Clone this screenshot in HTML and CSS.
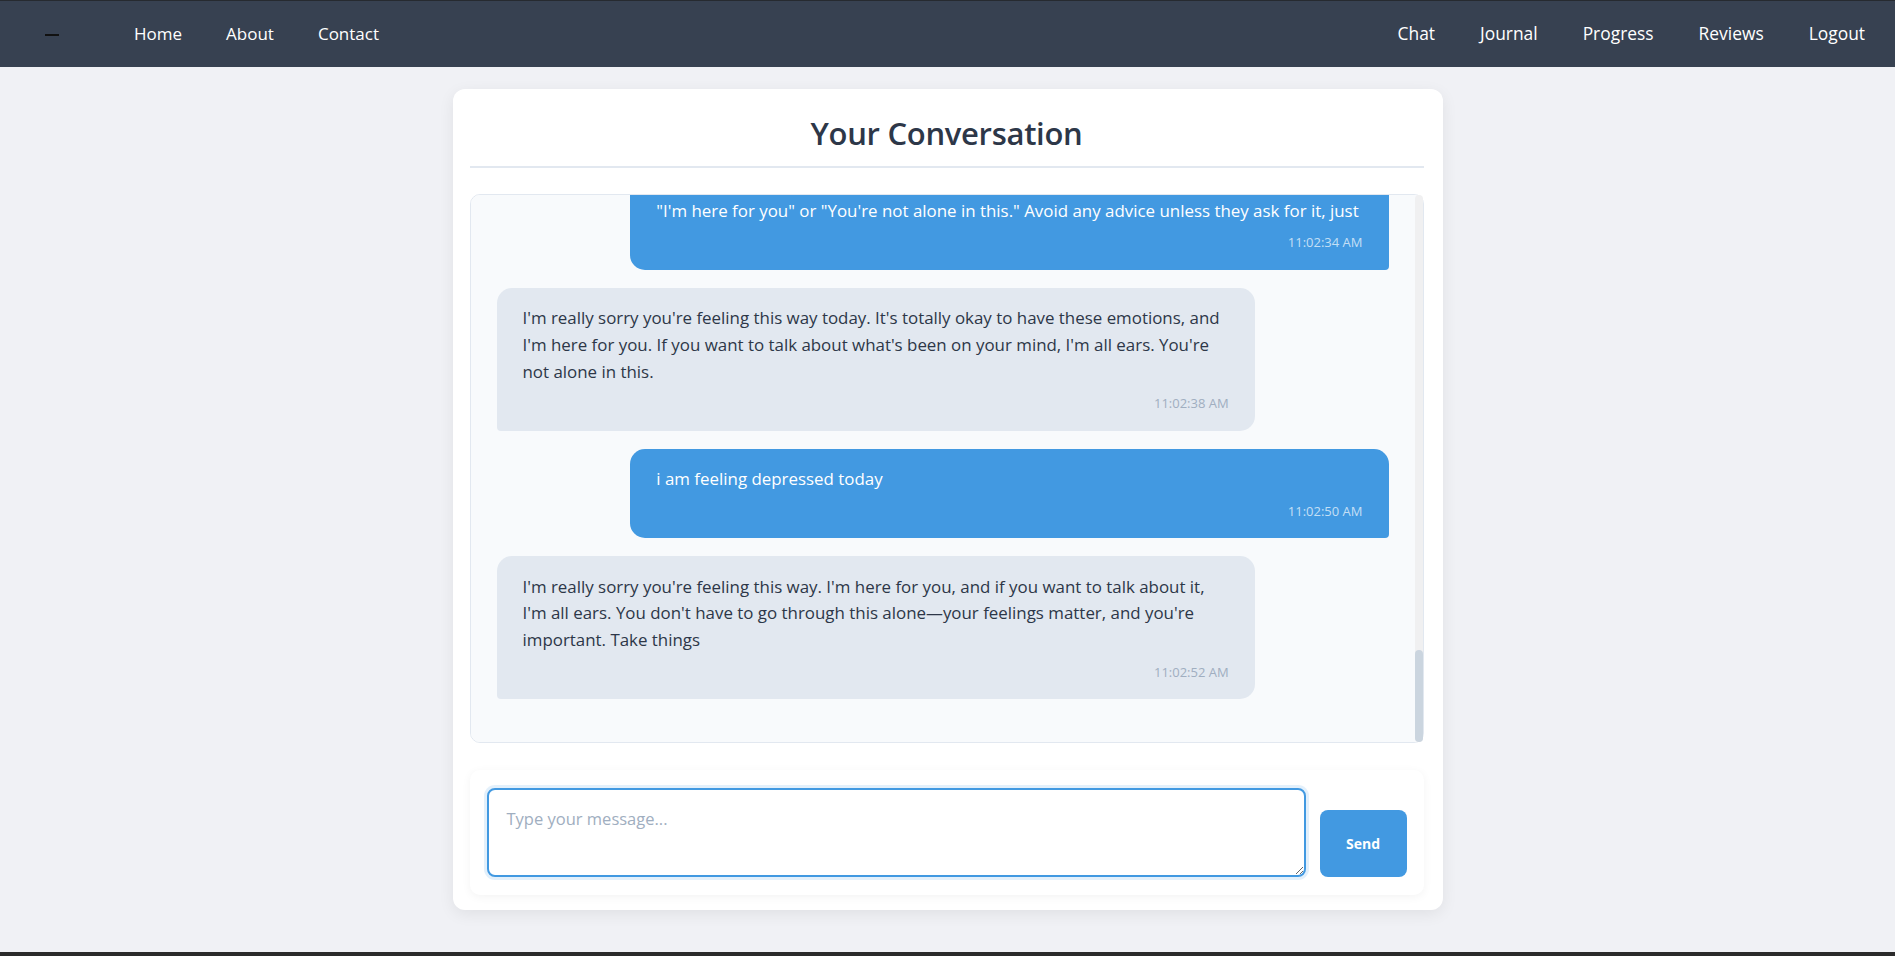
FILE: index.html
```html
<!DOCTYPE html>
<html lang="en">
<head>
<meta charset="utf-8">
<title>Your Conversation</title>
<link rel="stylesheet" href="styles.css">
</head>
<body>
<nav class="navbar">
  <div class="nav-left">
    <a class="logo" href="#" aria-label="Logo"><span class="logo-mark"></span></a>
    <ul class="nav-links">
      <li><a href="#">Home</a></li>
      <li><a href="#">About</a></li>
      <li><a href="#">Contact</a></li>
    </ul>
  </div>
  <ul class="nav-links nav-right">
    <li><a href="#">Chat</a></li>
    <li><a href="#">Journal</a></li>
    <li><a href="#">Progress</a></li>
    <li><a href="#">Reviews</a></li>
    <li><a href="#">Logout</a></li>
  </ul>
</nav>

<main class="page">
  <section class="chat-card">
    <h2 class="chat-title">Your Conversation</h2>

    <div class="messages-wrap">
      <div class="messages">
        <div class="messages-inner">
          <div class="msg user"><div class="msg-text">Keep it short and warm, with phrases like<br>"I'm here for you" or "You're not alone in this." Avoid any advice unless they ask for it, just</div><div class="msg-time">11:02:34 AM</div></div>
          <div class="msg bot"><div class="msg-text">I'm really sorry you're feeling this way today. It's totally okay to have these emotions, and I'm here for you. If you want to talk about what's been on your mind, I'm all ears. You're not alone in this.</div><div class="msg-time">11:02:38 AM</div></div>
          <div class="msg user"><div class="msg-text">i am feeling depressed today</div><div class="msg-time">11:02:50 AM</div></div>
          <div class="msg bot"><div class="msg-text">I'm really sorry you're feeling this way. I'm here for you, and if you want to talk about it, I'm all ears. You don't have to go through this alone—your feelings matter, and you're important. Take things</div><div class="msg-time">11:02:52 AM</div></div>
        </div>
      </div>
      <div class="scroll-track" aria-hidden="true"><div class="scroll-thumb"></div></div>
    </div>

    <form class="composer" onsubmit="return false;">
      <textarea class="composer-input" placeholder="Type your message..." autofocus></textarea>
      <button class="send-btn" type="button">Send</button>
    </form>
  </section>
</main>

<footer class="footer"></footer>
</body>
</html>
```

FILE: styles.css
```css
* {
  box-sizing: border-box;
}

html,
body {
  margin: 0;
  padding: 0;
}

body {
  font-family: "Open Sans", "Noto Sans", sans-serif;
  background: #f0f1f5;
  color: #2d3748;
}

/* ---------- Navbar ---------- */
.navbar {
  height: 67px;
  background: #374151;
  border-top: 1px solid #262a30;
  display: flex;
  align-items: center;
  justify-content: space-between;
  padding: 0 14px 2px 45px;
}

.nav-left {
  display: flex;
  align-items: center;
}

.logo {
  display: block;
  margin-right: 59px;
}

.logo-mark {
  display: block;
  width: 14px;
  height: 2px;
  background: #111;
  margin-top: 4px;
}

.nav-links {
  list-style: none;
  margin: 0;
  padding: 0;
  display: flex;
  gap: 12px;
}

.nav-right {
  gap: 13px;
}

.nav-links a {
  display: block;
  padding: 8px 16px;
  color: #ffffff;
  text-decoration: none;
  font-size: 17px;
}

.nav-right a {
  font-size: 17.4px;
}

/* ---------- Page / card ---------- */
.page {
  padding: 22px 0 42px;
}

.chat-card {
  width: 990px;
  margin: 0 auto;
  background: #ffffff;
  border-radius: 12px;
  padding: 17px 19px 15px 17px;
  box-shadow: 0 4px 16px rgba(0, 0, 0, 0.07);
}

.chat-title {
  margin: 8px 0 26px;
  padding-bottom: 14px;
  border-bottom: 2px solid #e2e8f0;
  text-align: center;
  font-size: 31px;
  line-height: 38px;
  letter-spacing: -0.3px;
  font-weight: 600;
  color: #2d3748;
}

/* ---------- Messages ---------- */
.messages-wrap {
  position: relative;
  margin-bottom: 27px;
}

.messages {
  height: 549px;
  border: 1px solid #e2e8f0;
  border-radius: 10px;
  background: #f8fafc;
  overflow-y: auto;
  scrollbar-width: none;
  display: flex;
  flex-direction: column-reverse;
}

.messages::-webkit-scrollbar {
  display: none;
}

.messages-inner {
  padding: 25px 34px 25px 26px;
}

.scroll-track {
  position: absolute;
  top: 1px;
  right: 1px;
  bottom: 1px;
  width: 8px;
  background: #f0f0f1;
  border-radius: 4px;
}

.scroll-thumb {
  position: absolute;
  left: 0;
  right: 0;
  bottom: 0;
  height: 92px;
  background: #cbd5df;
  border-radius: 4px;
}

.msg {
  width: 85%;
  padding: 17.5px 26px;
  border-radius: 15px;
  margin-bottom: 18px;
}

.msg.user {
  margin-left: auto;
  background: #4299e1;
  color: #ffffff;
  border-bottom-right-radius: 4px;
}

.msg.bot {
  background: #e2e8f0;
  color: #2d3748;
  border-bottom-left-radius: 4px;
}

.msg-text {
  font-size: 16.9px;
  line-height: 26.6px;
}

.msg-time {
  margin-top: 8px;
  font-size: 13px;
  line-height: 20px;
  text-align: right;
}

.msg.user .msg-time {
  color: rgba(255, 255, 255, 0.7);
}

.msg.bot .msg-time {
  color: #a0aec0;
}

/* ---------- Composer ---------- */
.composer {
  display: flex;
  align-items: flex-end;
  gap: 14px;
  padding: 18px 17px;
  background: #ffffff;
  border-radius: 10px;
  box-shadow: 0 2px 10px rgba(0, 0, 0, 0.05);
}

.composer-input {
  flex: 1;
  height: 89px;
  padding: 16px 16px 16px 18px;
  border: 2px solid #4299e1;
  border-radius: 8px;
  font-family: inherit;
  font-size: 16.5px;
  line-height: 1.6;
  color: #2d3748;
  outline: none;
  box-shadow: 0 0 0 3px rgba(66, 153, 225, 0.15);
}

.composer-input::placeholder {
  color: #a0aec0;
}

.send-btn {
  width: 87px;
  height: 67px;
  border: none;
  border-radius: 8px;
  background: #4299e1;
  color: #ffffff;
  font-family: inherit;
  font-size: 14px;
  font-weight: 700;
  cursor: pointer;
}

/* ---------- Footer ---------- */
.footer {
  height: 40px;
  background: #2b2b2b;
}
```
